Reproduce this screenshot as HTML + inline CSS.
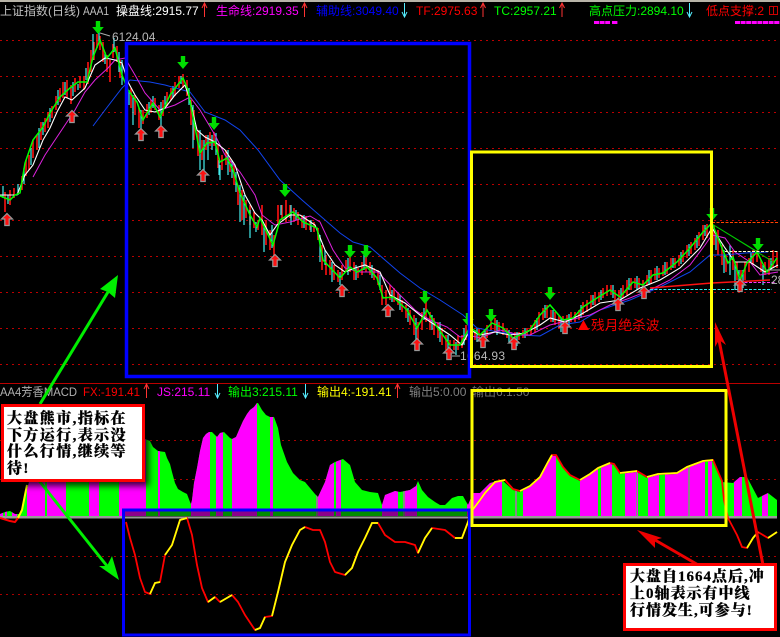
<!DOCTYPE html>
<html><head><meta charset="utf-8"><style>
html,body{margin:0;padding:0;background:#000;width:780px;height:637px;overflow:hidden}
svg{position:absolute;left:0;top:0}
text{font-family:"Liberation Sans","Noto Sans CJK SC",sans-serif;font-size:12px}
.box{position:absolute;background:#fff;border:3px solid #f00;box-sizing:border-box;color:#000;font-family:"Liberation Serif","Noto Serif CJK SC",serif;font-weight:900;font-size:15px;letter-spacing:1px;-webkit-text-stroke:.25px #000;box-shadow:4px 4px 6px rgba(0,0,0,.75);white-space:nowrap}
</style></head><body>
<svg width="780" height="637" viewBox="0 0 780 637">
<defs>
<path id="u" d="M0-6.5L5.5-1H2.2V5.5H-2.2V-1H-5.5Z" fill="#f11" stroke="#999" stroke-width="1.2"/>
<path id="d" d="M-2.2-7H2.2V-1H5.8L0 6L-5.8-1H-2.2Z" fill="#0d0"/>
<clipPath id="h"><path d="M0 517V514L5 512L10 511L15 514L20 514L27 490L32 470L145 439L150 441L153 447L158 451L165 452L167 458L170 464L172 472L175 483L178 489L183 492L187 494L190 502L191 504L192 500L194 483L197 468L200 451L203 438L206 434L209 432L212 432L215 435L217 437L220 433L224 432L227 435L230 438L232 439L236 437L239 430L243 421L247 414L250 410L254 407L257 403L258 403L262 410L266 415L270 417L274 417L278 428L281 445L287 462L293 473L300 480L305 482L315 494L318 497L325 482L330 465L335 462L343 459L350 465L355 482L362 490L370 492L378 493L382 505L385 495L395 491L400 492L410 490L416 486L418 481L422 490L428 497L435 502L440 505L445 505L452 498L458 496L463 496L468 505L473 493L480 493L490 483L502 480L513 490L520 492L530 487L540 478L548 463L552 456L556 456L563 468L570 476L580 481L590 475L598 469L610 464L614 465L620 474L637 472L647 478L658 475L677 474L687 468L703 462L713 461L722 482L733 483L740 477L747 477L758 498L768 493L777 500V517Z"/></clipPath>
</defs>
<rect x="0" y="0" width="780" height="2" fill="#b8b4a8"/>
<!-- grid -->
<path d="M0 40.5H780M0 76.5H780M0 112.5H780M0 148.5H780M0 184.5H780M0 220.5H780M0 256.5H780M0 292.5H780M0 328.5H780M0 364.5H780" stroke="#b00" stroke-width="1" stroke-dasharray="2 4"/>
<path d="M0 383.5H780" stroke="#b00" stroke-width="1"/>
<path d="M0 440.5H780M0 479.5H780M0 556.5H780M0 594.5H780" stroke="#a00" stroke-width="1" stroke-dasharray="2 4"/>
<!-- header -->
<g>
<text x="0" y="15" fill="#c0c0c0">上证指数(日线)</text>
<text x="83" y="15" fill="#c0c0c0" textLength="26" lengthAdjust="spacingAndGlyphs">AAA1</text>
<text x="116" y="15" fill="#fff">操盘线:2915.77</text>
<text x="216" y="15" fill="#f0f">生命线:2919.35</text>
<text x="316" y="15" fill="#00f">辅助线:3049.40</text>
<text x="416" y="15" fill="#f00">TF:2975.63</text>
<text x="494" y="15" fill="#0f0">TC:2957.21</text>
<text x="589" y="15" fill="#0f0">高点压力:2894.10</text>
<text x="706" y="15" fill="#f00">低点支撑:2</text>
<path d="M204.5 17V4M202 8L204.5 3L207 8M304.5 17V4M302 8L304.5 3L307 8M483 17V4M480.5 8L483 3L485.5 8M562 17V4M559.5 8L562 3L564.5 8" stroke="#f33" fill="none"/>
<path d="M404.5 3V16M402 12L404.5 17L407 12M689.5 3V16M687 12L689.5 17L692 12" stroke="#5ef" fill="none"/>
<path d="M769.5 6.5H777.5V14.5H769.5ZM773.5 6.5V14.5" stroke="#c00" fill="none"/>
<path d="M594 22.5H610M612 22.5H618M735 22.5H780" stroke="#f0f" stroke-width="3" stroke-dasharray="5 .6"/>
<text x="0" y="396" fill="#b0b0b0" textLength="77" lengthAdjust="spacingAndGlyphs">AA4芳香MACD</text>
<text x="83" y="396" fill="#f00" textLength="57" lengthAdjust="spacingAndGlyphs">FX:-191.41</text>
<text x="157" y="396" fill="#f0f">JS:215.11</text>
<text x="228" y="396" fill="#0f0">输出3:215.11</text>
<text x="317" y="396" fill="#ff0">输出4:-191.41</text>
<text x="409" y="396" fill="#808080">输出5:0.00</text>
<text x="472" y="396" fill="#707070">输出6:1.50</text>
<path d="M146.5 398V385M144 389L146.5 384L149 389M397.5 398V385M395 389L397.5 384L400 389" stroke="#f33" fill="none"/>
<path d="M217.5 384V397M215 393L217.5 398L220 393M305.5 384V397M303 393L305.5 398L308 393" stroke="#5ef" fill="none"/>
</g>
<!-- candles -->
<path fill="none" stroke="#f11" stroke-width="1.6" d="M5 192V212M10 190V205M14 188V198M22 176V190M26 160V176M29 155V170M33 140V158M37 135V150M41 122V140M45 118V132M48 112V128M52 106V118M56 96V110M60 88V102M63 82V98M67 80V98M71 85V104M75 78V92M80 76V88M84 76V90M88 62V84M91 50V72M94 42V60M97 34V48M100 36V50M103 42V62M107 55V72M110 60V82M113 44V58M117 46V62M120 60V78M127 85V98M131 88V108M135 95V115M139 108V128M143 110V124M147 104V118M151 100V112M155 98V110M159 105V120M163 100V116M167 92V106M171 88V100M175 82V96M179 76V88M183 74V88M187 80V96M191 100V125M194 110V140M198 130V156M202 140V160M206 135V150M210 132V146M214 132V146M218 145V168M222 155V170M226 150V165M230 158V172M234 165V185M238 185V205M242 190V220M246 200V218M250 205V225M254 212V228M258 220V230M262 205V235M266 220V245M270 230V250M274 235V260M278 205V225M282 205V220M286 200V222M290 205V218M294 208V222M298 212V225M302 215V228M306 216V230M310 220V230M314 222V232M318 228V240M322 245V270M326 255V275M330 260V275M334 265V280M338 270V282M342 265V280M346 260V272M350 255V272M354 262V280M358 268V278M362 262V275M366 255V272M370 262V275M374 268V280M378 270V285M382 285V305M386 290V305M390 285V300M394 288V302M398 292V305M402 300V312M406 305V318M410 310V325M414 315V335M418 322V345M422 312V330M426 300V322M430 312V330M434 318V335M438 322V338M442 328V345M446 335V350M450 340V352M454 340V350M458 335V350M462 335V348M466 325V340M475 330V340M479 328V340M483 332V342M487 325V338M491 315V330M495 318V332M499 322V332M503 323V335M507 328V338M511 332V342M515 332V342M519 332V340M523 330V338M527 328V336M531 325V335M535 320V332M539 312V325M543 308V320M547 305V318M551 310V322M555 312V325M559 316V328M563 316V326M567 315V325M571 312V322M575 312V322M579 310V320M583 302V315M587 300V312M591 295V308M595 292V305M599 292V302M603 288V298M607 285V296M611 285V295M615 290V300M619 290V300M623 285V298M627 280V295M631 278V290M635 278V288M639 278V288M643 280V290M647 275V286M651 270V284M655 268V280M659 268V278M663 265V276M667 262V274M671 258V270M675 258V268M679 255V266M683 250V262M687 245V258M691 242V254M695 238V250M699 232V246M703 225V240M707 224V238M714 225V245M718 230V255M722 245V265M726 255V272M733 250V270M737 262V280M741 270V285M745 262V280M749 258V272M753 250V265M757 250V262M761 260V272M765 262V275M769 258V275M773 250V268M777 252V268"/>
<path fill="none" stroke="#4ee" stroke-width="1.2" d="M3 186V198M8 195V204M18 184V195M24 168V184M31 148V165M39 128V148M43 122V135M50 108V122M58 90V105M65 82V95M73 82V96M78 84V90M86 68V80M93 34V60M99 30V42M105 52V64M114 38V52M119 52V72M122 60V85M129 90V105M133 95V125M141 110V130M149 102V115M153 96V108M161 102V125M165 96V108M173 86V98M181 76V84M189 88V105M193 105V148M200 130V170M204 140V175M208 135V160M212 135V150M216 133V155M219 160V175M220 165V180M228 150V175M232 160V178M236 172V192M240 185V222M244 195V225M250 210V238M256 222V232M264 225V252M272 225V248M281 205V215M291 205V225M296 210V220M304 215V228M311 220V232M320 235V262M325 250V265M332 262V282M340 272V285M348 258V275M356 265V280M364 255V270M372 265V278M380 275V290M392 290V302M400 295V310M408 308V322M416 318V345M424 308V320M432 315V330M440 322V342M448 335V352M456 342V355M464 328V345M477 328V342M485 330V345M497 320V335M509 330V342M517 332V346M525 328V338M537 318V330M545 305V318M553 310V322M561 318V332M569 314V325M581 305V318M593 295V305M601 290V300M613 285V298M621 288V302M629 278V290M637 276V290M649 270V285M657 266V280M665 262V275M673 258V268M681 252V264M689 244V256M697 235V248M705 225V236M716 232V250M724 250V273M730 245V275M735 262V290M739 270V292M743 270V288M751 252V262M763 265V285M771 258V270"/>
<!-- MAs -->
<polyline fill="none" stroke="#14e" stroke-width="1" points="93,126 105,110 122,88 130,80 150,82 165,85 190,92 205,112 225,120 240,130 258,150 280,180 302,200 340,233 353,242 370,247 400,273 420,288 440,300 463,315 477,328 493,331 520,335 540,336 560,325 580,322 600,310 630,300 660,287 690,272 710,255 725,255 745,253 768,252"/>
<polyline fill="none" stroke="#d2d" stroke-width="1" points="33,177 45,155 55,140 65,125 75,110 85,92 95,80 108,68 115,60 125,58 135,75 145,93 160,110 175,105 190,97 200,110 215,135 225,155 240,172 255,195 262,215 275,225 290,222 310,216 320,222 333,250 345,268 360,272 378,272 395,290 415,310 430,320 447,327 460,337 468,335 480,338 500,330 520,335 530,335 550,325 570,320 590,315 610,305 630,298 650,290 670,280 690,265 705,245 712,235 725,238 735,252 750,262 760,275 778,272"/>
<polyline fill="none" stroke="#fff" stroke-width="1.1" points="0,195 17,195 25,175 33,165 43,140 50,128 57,112 65,97 72,100 85,88 95,65 105,58 115,60 122,63 128,82 135,95 145,110 155,112 165,108 175,95 185,85 190,100 197,130 205,137 215,142 225,150 235,165 245,195 255,213 262,220 270,235 277,225 290,215 300,215 315,225 325,250 335,265 345,272 355,268 365,265 380,272 390,295 405,303 420,315 435,325 450,335 462,345 470,330 480,335 495,332 510,335 525,333 540,325 550,318 565,322 580,315 600,303 620,300 640,288 660,280 680,268 700,248 712,228 725,248 735,262 750,262 765,272 778,265"/>
<polyline fill="none" stroke="#0f0" stroke-width="1.5" points="0,196 10,200 15,195 20,193 25,163 33,140 43,127 50,113 60,97 70,88 78,82 87,82 93,57 100,40 107,58 115,48 122,75 128,90 137,102 143,120 153,103 160,117 170,95 183,78 188,90 193,117 200,153 207,143 215,142 220,162 227,158 233,170 240,193 250,215 257,227 260,218 273,245 280,220 293,212 303,222 317,228 323,260 340,278 350,267 357,272 367,267 377,278 383,298 393,297 407,310 417,328 427,310 437,327 450,345 460,345 470,327 480,335 492,323 503,328 513,338 520,335 530,330 540,315 550,305 563,320 573,318 583,307 597,298 610,290 620,297 633,282 643,285 653,275 663,273 677,262 690,248 703,232 712,223 720,243 728,263 733,257 740,280 747,263 757,252 767,272 777,258"/>
<!-- right indicators -->
<path d="M712 222.5H778" stroke="#f40" stroke-dasharray="3 1.5" fill="none"/>
<path d="M712 224L775 263M712 224L758 252" stroke="#0c0" fill="none"/>
<path d="M725 251.5H778" stroke="#ffc" stroke-dasharray="3 1.5" fill="none"/>
<path d="M650 288L712 283L770 280" stroke="#f11" stroke-width="1.5" fill="none"/>
<path d="M650 289.5H772" stroke="#3ee" stroke-dasharray="3 1.5" fill="none"/>
<path d="M740 282.5H775" stroke="#f3f" stroke-dasharray="3 1.5" fill="none"/>
<path d="M767 270H780" stroke="#aaa" fill="none"/>
<text x="771" y="284" fill="#bbb">28</text>
<!-- labels -->
<path d="M100 33L110 36" stroke="#aaa" fill="none"/>
<text x="112" y="41" fill="#b8b8b8">6124.04</text>
<path d="M452 356H460" stroke="#aaa" fill="none"/>
<text x="460" y="360" fill="#b8b8b8" textLength="45" lengthAdjust="spacing">1664.93</text>
<path d="M578 330L583.500 320L589 330Z" fill="#f00"/>
<text x="591" y="330" fill="#e00" style="font-size:13.700px">残月绝杀波</text>
<!-- markers -->
<use href="#u" x="7" y="220"/><use href="#u" x="72" y="117"/><use href="#u" x="141" y="135"/><use href="#u" x="161" y="132"/><use href="#u" x="203" y="176"/><use href="#u" x="275" y="261"/><use href="#u" x="342" y="291"/><use href="#u" x="388" y="311"/><use href="#u" x="417" y="345"/><use href="#u" x="449" y="354"/><use href="#u" x="483" y="342"/><use href="#u" x="514" y="344"/><use href="#u" x="565" y="328"/><use href="#u" x="618" y="305"/><use href="#u" x="644" y="293"/><use href="#u" x="740" y="286"/>
<use href="#d" x="98" y="28"/><use href="#d" x="183" y="63"/><use href="#d" x="214" y="124"/><use href="#d" x="285" y="191"/><use href="#d" x="350" y="252"/><use href="#d" x="366" y="252"/><use href="#d" x="425" y="298"/><use href="#d" x="468" y="320"/><use href="#d" x="491" y="316"/><use href="#d" x="550" y="294"/><use href="#d" x="712" y="215"/><use href="#d" x="758" y="245"/>
<!-- histogram -->
<g clip-path="url(#h)">
<rect x="0" y="395" width="780" height="122" fill="#0f0"/>
<path fill="#f0f" d="M0 395h3v122H0ZM5 395h2v122H5ZM12 395h5v122h-5ZM27 395h18v122H27ZM47 395h19v122H47ZM89 395h10v122H89ZM119 395h27v122h-27ZM158 395h2v122h-2ZM191 395h19v122h-19ZM216 395h7v122h-7ZM232 395h25v122h-25ZM270 395h3v122h-3ZM318 395h16v122h-16ZM336 395h5v122h-5ZM382 395h16v122h-16ZM405 395h12v122h-12ZM467 395h35v122h-35ZM523 395h33v122h-33ZM580 395h18v122h-18ZM601 395h11v122h-11ZM625 395h13v122h-13ZM648 395h11v122h-11ZM665 395h23v122h-23ZM690 395h15v122h-15ZM708 395h4v122h-4ZM734 395h8v122h-8ZM762 395h6v122h-6Z"/>
<path fill="#888" d="M316 395h2v122h-2ZM403 395h2v122h-2ZM515 395h2v122h-2ZM688 395h2v122h-2ZM636 395h1v122h-1Z"/>
</g>
<rect x="0" y="516" width="777" height="2.500" fill="#999"/>
<rect x="125" y="511" width="345" height="6" fill="#000" fill-opacity=".45"/>
<!-- MACD line -->
<polyline fill="none" stroke="#f00" stroke-width="2" stroke-linejoin="round" points="0,518 10,521 15,522 18,518"/>
<polyline fill="none" stroke="#ff0" stroke-width="2" points="18,518 22,510 27,485"/>
<polyline fill="none" stroke="#f00" stroke-width="1.800" stroke-linejoin="round" points="126,522 130,538 135,555 140,578 145,592 150,594 155,583 160,582 165,555 172,545 180,520 187,518 192,535 197,565 202,588 208,602 215,597 220,602 232,595 238,602 245,615 255,630 260,628 265,617 272,616 278,592 285,562 292,545 300,530 305,527 313,530 320,530 325,542 330,562 335,572 345,575 352,568 358,552 365,538 372,523 378,523 385,535 395,542 405,542 415,545 418,553 425,538 432,528 445,530 455,538 462,538 468,522 471,512 480,500 485,493 495,482 505,480 513,489 520,491 530,486 540,477 548,462 552,455 556,455 563,467 570,475 580,480 590,474 598,468 610,463 614,464 620,473 637,471 647,477 658,474 677,473 687,467 703,461 713,460 722,481 724,500 728,518 737,535 742,547 747,548 753,538 758,532 768,538 777,532"/>
<path fill="none" stroke="#ff0" stroke-width="1.800" d="M150 594L155 583L160 582M165 555L172 545L180 520L187 518M208 602L215 597M220 602L232 595M255 630L260 628L265 617M272 616L278 592L285 562L292 545L300 530L305 527M345 575L352 568L358 552L365 538L372 523L378 523M418 553L425 538L432 528M455 538L462 538L468 522L471 512L480 500L485 493L495 482L505 480M520 491L530 486L540 477L548 462L552 455M580 480L590 474L598 468L610 463M620 473L637 471M647 477L658 474L677 473L687 467L703 461L713 460M747 548L753 538L758 532M768 538L777 532"/>
<!-- rectangles -->
<path d="M126.500 43.500H469.500V376.500H126.500Z" fill="none" stroke="#00f" stroke-width="3.500"/>
<path d="M123.500 510H469.500V635H123.500Z" fill="none" stroke="#00f" stroke-width="3"/>
<path d="M471.500 152H711.500V366.500H471.500Z" fill="none" stroke="#ff0" stroke-width="3"/>
<path d="M472 390.500H726V525.500H472Z" fill="none" stroke="#ff0" stroke-width="3"/>
<!-- big arrows -->
<path d="M40 404L108 292" stroke="#0e0" stroke-width="3" fill="none"/>
<path d="M118 275L100 289L108 292L115 298Z" fill="#0e0"/>
<path d="M37 478L107 566" stroke="#0e0" stroke-width="3" fill="none"/>
<path d="M119 580L99 566L107 566L112 556Z" fill="#0e0"/>
<path d="M719 340L763 565" stroke="#e00" stroke-width="3" fill="none"/>
<path d="M715 322L715 347L719 340L726 345Z" fill="#e00"/>
<path d="M655 540L700 566" stroke="#e00" stroke-width="3" fill="none"/>
<path d="M637 530L655 548L655 540L662 538Z" fill="#e00"/>
</svg>
<div class="box" style="left:1px;top:404px;width:144px;height:78px;padding:4px 0 0 3px;line-height:16.500px;letter-spacing:1.4px">大盘熊市,指标在<br>下方运行,表示没<br>什么行情,继续等<br>待!</div>
<div class="box" style="left:623px;top:563px;width:154px;height:68px;padding:3px 0 0 4px;line-height:17px">大盘自1664点后,冲<br>上0轴表示有中线<br>行情发生,可参与!</div>
</body></html>
